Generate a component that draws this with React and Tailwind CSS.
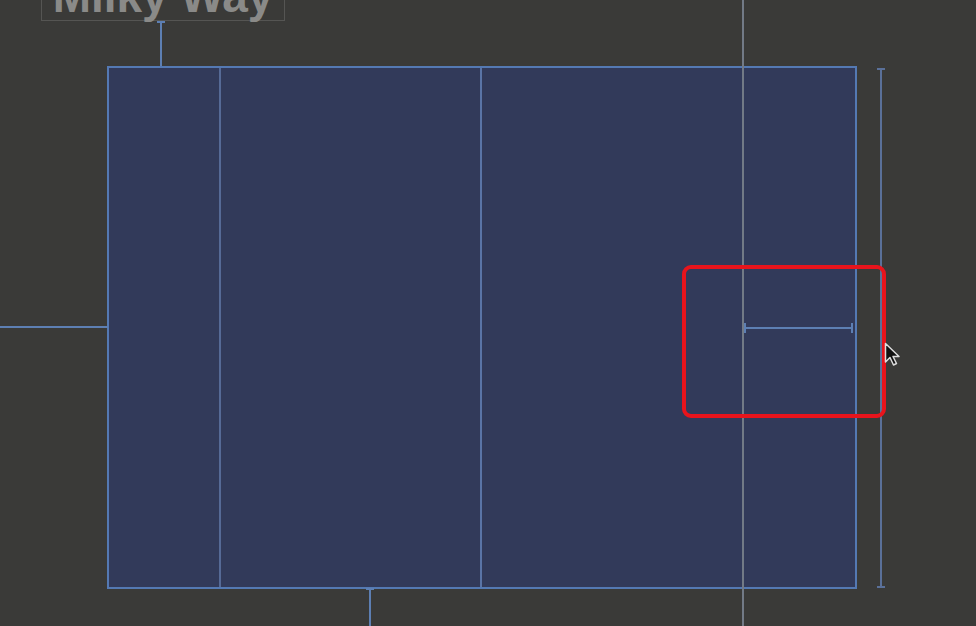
import React from "react";

export default function App() {
  return (
    <div className="relative w-[976px] h-[626px] overflow-hidden bg-[#3a3a38]" style={{ fontFamily: '"Liberation Sans", Arial, sans-serif' }}>
      {/* Milky Way label, cropped at top */}
      <div className="absolute left-[41px] top-[-40px] w-[244px] h-[61px] border border-[#555553] flex items-end justify-center">
        <span className="text-[46px] font-bold leading-none text-[#8a8a88] mb-[1px]">Milky Way</span>
      </div>

      {/* top connector */}
      <div className="absolute left-[160px] top-[22px] w-[2px] h-[45px] bg-[#5d7fb3]" />
      <div className="absolute left-[157px] top-[21px] w-[8px] h-[2px] bg-[#5d7fb3]" />

      {/* main view with inner columns */}
      <div className="absolute left-[107px] top-[66px] w-[750px] h-[523px] bg-[#323a5a] border-2 border-[#5479b3] flex">
        <div className="w-[112px] border-r-2 border-[#566a96]" />
        <div className="w-[261px] border-r-2 border-[#5a74a6]" />
        <div className="flex-1" />
      </div>

      {/* full height vertical guide */}
      <div className="absolute left-[742px] top-0 w-[2px] h-[626px] bg-[#727a86]" />

      {/* left connector */}
      <div className="absolute left-0 top-[326px] w-[108px] h-[2px] bg-[#5d7fb3]" />

      {/* bottom connector */}
      <div className="absolute left-[369px] top-[588px] w-[2px] h-[38px] bg-[#5d7fb3]" />
      <div className="absolute left-[366px] top-[588px] w-[8px] h-[2px] bg-[#5d7fb3]" />

      {/* right dimension line */}
      <div className="absolute left-[877px] top-[68px] w-[8px] h-[520px] flex flex-col items-center justify-between">
        <div className="w-[8px] h-[2px] bg-[#5a7099]" />
        <div className="w-[2px] flex-1 bg-[#5a7099]" />
        <div className="w-[8px] h-[2px] bg-[#5a7099]" />
      </div>

      {/* inner horizontal measure */}
      <div className="absolute left-[744px] top-[323px] w-[109px] h-[10px] flex items-center">
        <div className="w-[2px] h-[10px] bg-[#5d7fb3]" />
        <div className="flex-1 h-[2px] bg-[#5d7fb3]" />
        <div className="w-[2px] h-[10px] bg-[#5d7fb3]" />
      </div>

      {/* red highlight */}
      <div className="absolute left-[682px] top-[265px] w-[204px] h-[153px] rounded-[9px] border-[4px] border-[#e8141c]" />

      {/* cursor */}
      <svg className="absolute left-[884px] top-[342px]" width="18" height="26" viewBox="0 0 18 26">
        <path d="M1.5 1.5 L1.5 20 L6 15.5 L9.5 23 L12.5 21.5 L9 14.5 L15 14.5 Z" fill="#111" stroke="#ddd" strokeWidth="1.5" strokeLinejoin="round" />
      </svg>
    </div>
  );
}
